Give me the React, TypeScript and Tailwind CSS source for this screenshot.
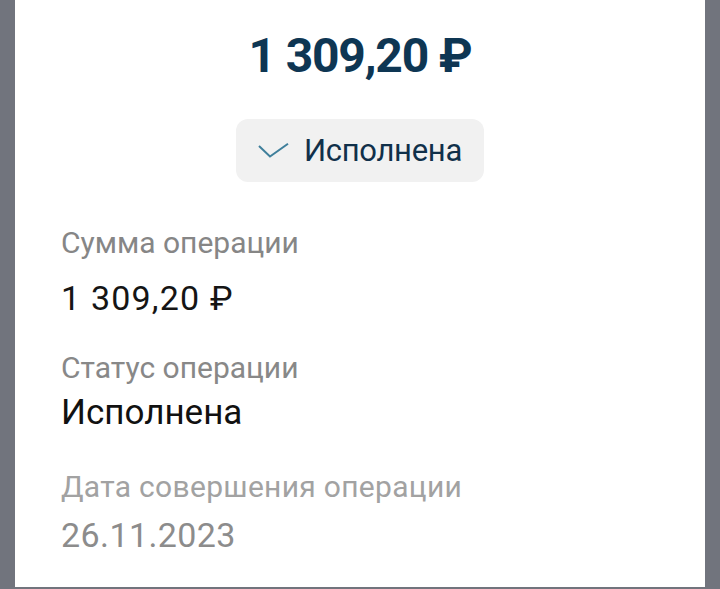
import React from "react";

export default function App() {
  const font = { fontFamily: "Roboto, 'Noto Sans', sans-serif" };
  return (
    <div className="w-full h-[589px] bg-[#71747d] flex px-[15px] pb-[2px]" style={font}>
      <div className="flex-1 bg-white flex flex-col">
        <div className="pt-[32px] text-center text-[48px] leading-[48px] font-bold text-[#0e3653] tracking-[-1.2px]">
          1 309,20 ₽
        </div>
        <div className="mt-[39px] flex justify-center">
          <div className="h-[63px] w-[248px] rounded-[12px] bg-[#f1f1f1] flex items-center pl-[22px]">
            <svg width="32" height="16" viewBox="0 0 32 16" className="mr-[14px]">
              <polyline points="1,3 12,13.5 30,0.8" fill="none" stroke="#3f7f9b" strokeWidth="2" strokeLinejoin="miter" />
            </svg>
            <span className="text-[31px] leading-[32px] text-[#10304a] tracking-[-0.3px]">Исполнена</span>
          </div>
        </div>
        <div className="pl-[46px] flex flex-col">
          <div className="mt-[43px] text-[30px] leading-[36px] text-[#868686]">Сумма операции</div>
          <div className="mt-[17px] text-[34px] leading-[40px] text-[#151515] tracking-[1.2px]">1 309,20 ₽</div>
          <div className="mt-[32px] text-[30px] leading-[36px] text-[#888888]">Статус операции</div>
          <div className="mt-[7px] text-[35px] leading-[40px] text-[#111111]">Исполнена</div>
          <div className="mt-[36px] text-[30px] leading-[36px] text-[#a2a2a2] tracking-[0.3px]">Дата совершения операции</div>
          <div className="mt-[10px] text-[34px] leading-[40px] text-[#8c8c8c] tracking-[0.4px]">26.11.2023</div>
        </div>
      </div>
    </div>
  );
}
